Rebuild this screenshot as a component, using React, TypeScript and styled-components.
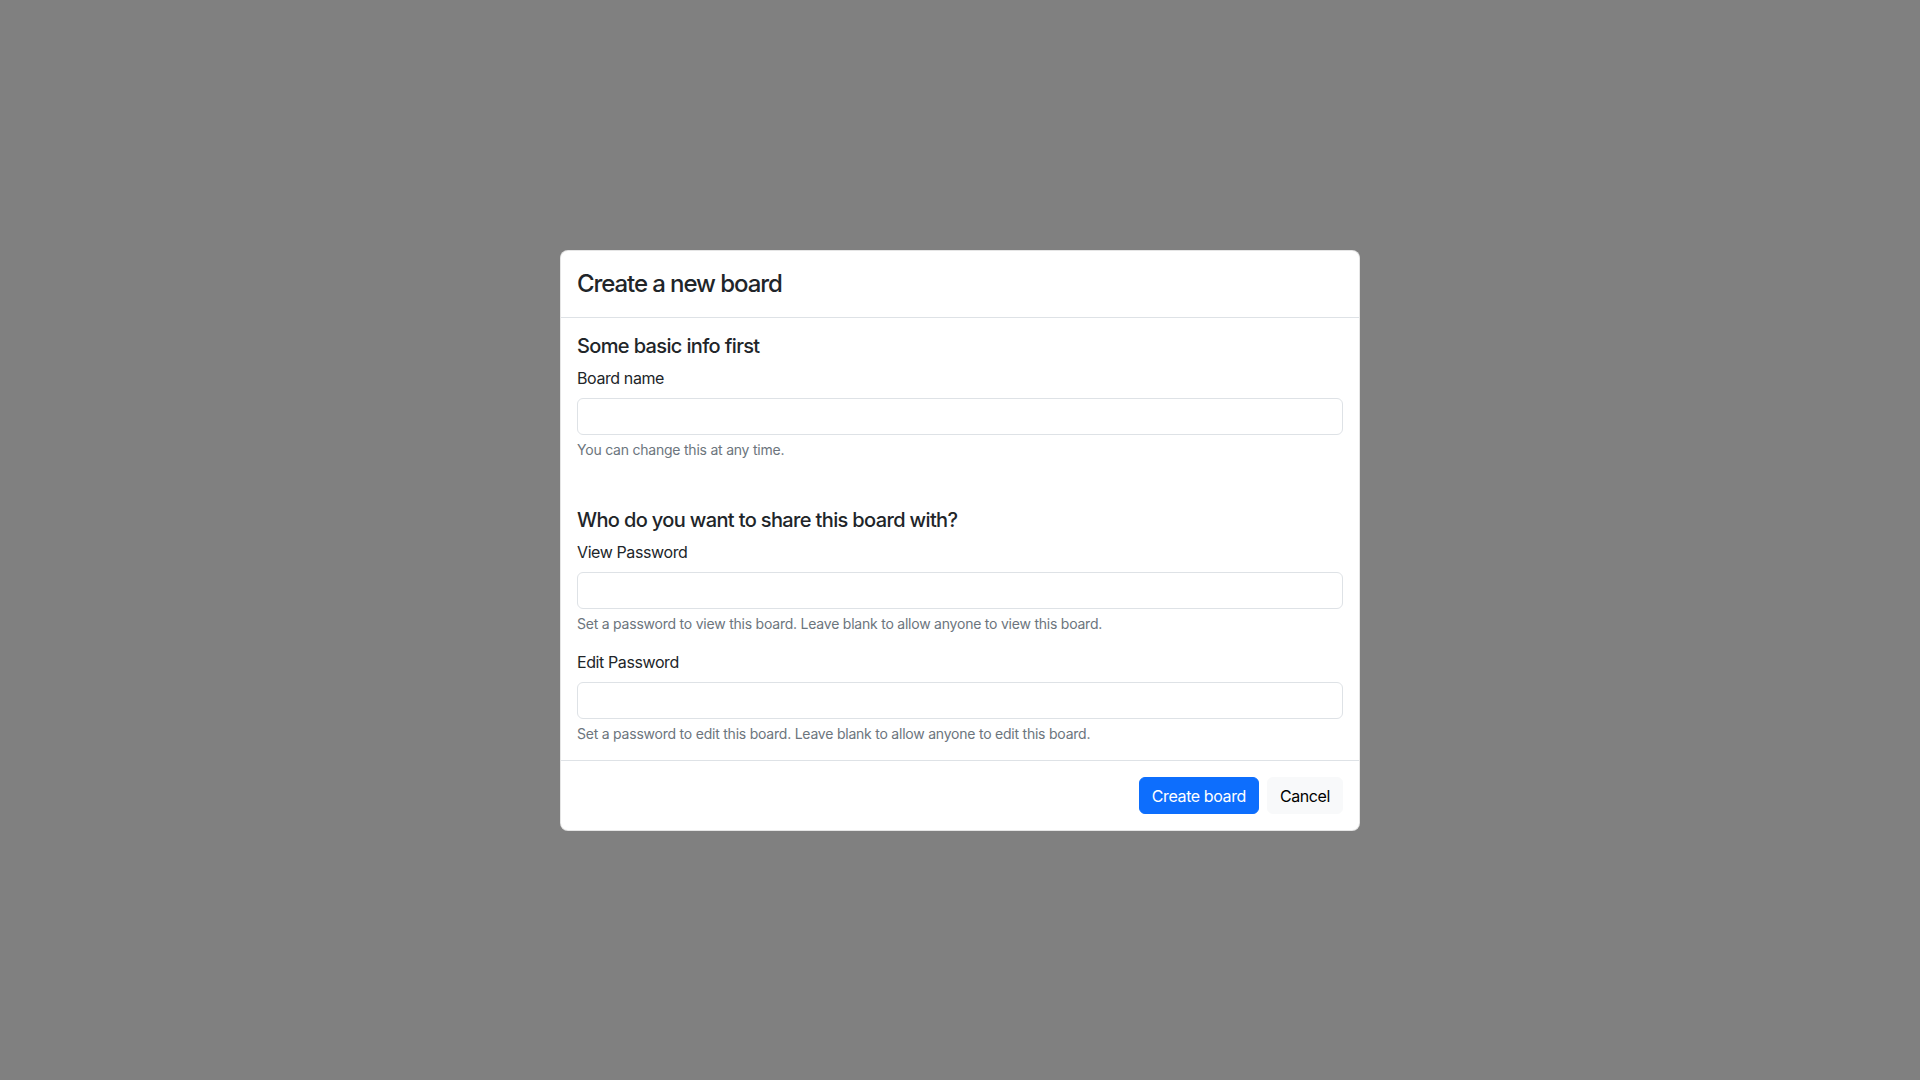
import React from "react";
import styled, { createGlobalStyle } from "styled-components";

const GlobalStyle = createGlobalStyle`
  *, *::before, *::after { box-sizing: border-box; }
  html, body { margin: 0; padding: 0; }
  body {
    background: #808080;
    font-family: Inter, "Noto Sans", "Liberation Sans", sans-serif;
    color: #212529;
    font-size: 16px;
    line-height: 1.5;
  }
`;

const Backdrop = styled.div`
  width: 100%;
  height: 100vh;
  display: flex;
  align-items: center;
  justify-content: center;
`;

const Modal = styled.div`
  width: 800px;
  background: #fff;
  border: 1px solid rgba(0, 0, 0, 0.1);
  border-radius: 8px;
  display: flex;
  flex-direction: column;
`;

const Header = styled.div`
  padding: 16px;
  border-bottom: 1px solid #dee2e6;
`;

const Title = styled.h4`
  margin: 0;
  font-size: 24px;
  font-weight: 500;
  line-height: 34px;
  letter-spacing: -0.045em;
`;

const Body = styled.div`
  padding: 16px;
  display: flex;
  flex-direction: column;
  gap: 48px;
`;

const Section = styled.section`
  display: flex;
  flex-direction: column;
  gap: 16px;
`;

const SectionHead = styled.h5`
  margin: 0 0 -8px;
  font-size: 20px;
  font-weight: 500;
  line-height: 24px;
  letter-spacing: -0.032em;
`;

const Group = styled.div`
  display: flex;
  flex-direction: column;
`;

const Label = styled.label`
  display: block;
  margin-bottom: 8px;
  font-size: 16px;
  line-height: 24px;
  letter-spacing: -0.025em;
`;

const Input = styled.input`
  display: block;
  width: 100%;
  height: 37px;
  padding: 6px 12px;
  font: inherit;
  color: #212529;
  background: #fff;
  border: 1px solid #dee2e6;
  border-radius: 6px;
  outline: none;
`;

const Help = styled.div`
  margin-top: 4px;
  font-size: 14px;
  line-height: 21px;
  letter-spacing: -0.016em;
  color: #6c757d;
`;

const Footer = styled.div`
  display: flex;
  justify-content: flex-end;
  align-items: center;
  padding: 12px;
  border-top: 1px solid #dee2e6;
`;

const Button = styled.button<{ $variant: "primary" | "light" }>`
  margin: 4px;
  height: 37px;
  padding: 6px 12px;
  font: inherit;
  font-size: 16px;
  line-height: 24px;
  letter-spacing: -0.025em;
  border-radius: 6px;
  border: 1px solid ${(p) => (p.$variant === "primary" ? "#0d6efd" : "#f8f9fa")};
  background: ${(p) => (p.$variant === "primary" ? "#0d6efd" : "#f8f9fa")};
  color: ${(p) => (p.$variant === "primary" ? "#fff" : "#000")};
  cursor: pointer;
`;

export default function App() {
  return (
    <>
      <GlobalStyle />
      <Backdrop>
        <Modal>
          <Header>
            <Title>Create a new board</Title>
          </Header>
          <Body>
            <Section>
              <SectionHead>Some basic info first</SectionHead>
              <Group>
                <Label htmlFor="board-name">Board name</Label>
                <Input id="board-name" type="text" />
                <Help>You can change this at any time.</Help>
              </Group>
            </Section>
            <Section>
              <SectionHead>Who do you want to share this board with?</SectionHead>
              <Group>
                <Label htmlFor="view-pw">View Password</Label>
                <Input id="view-pw" type="password" />
                <Help>Set a password to view this board. Leave blank to allow anyone to view this board.</Help>
              </Group>
              <Group>
                <Label htmlFor="edit-pw">Edit Password</Label>
                <Input id="edit-pw" type="password" />
                <Help>Set a password to edit this board. Leave blank to allow anyone to edit this board.</Help>
              </Group>
            </Section>
          </Body>
          <Footer>
            <Button $variant="primary">Create board</Button>
            <Button $variant="light">Cancel</Button>
          </Footer>
        </Modal>
      </Backdrop>
    </>
  );
}
